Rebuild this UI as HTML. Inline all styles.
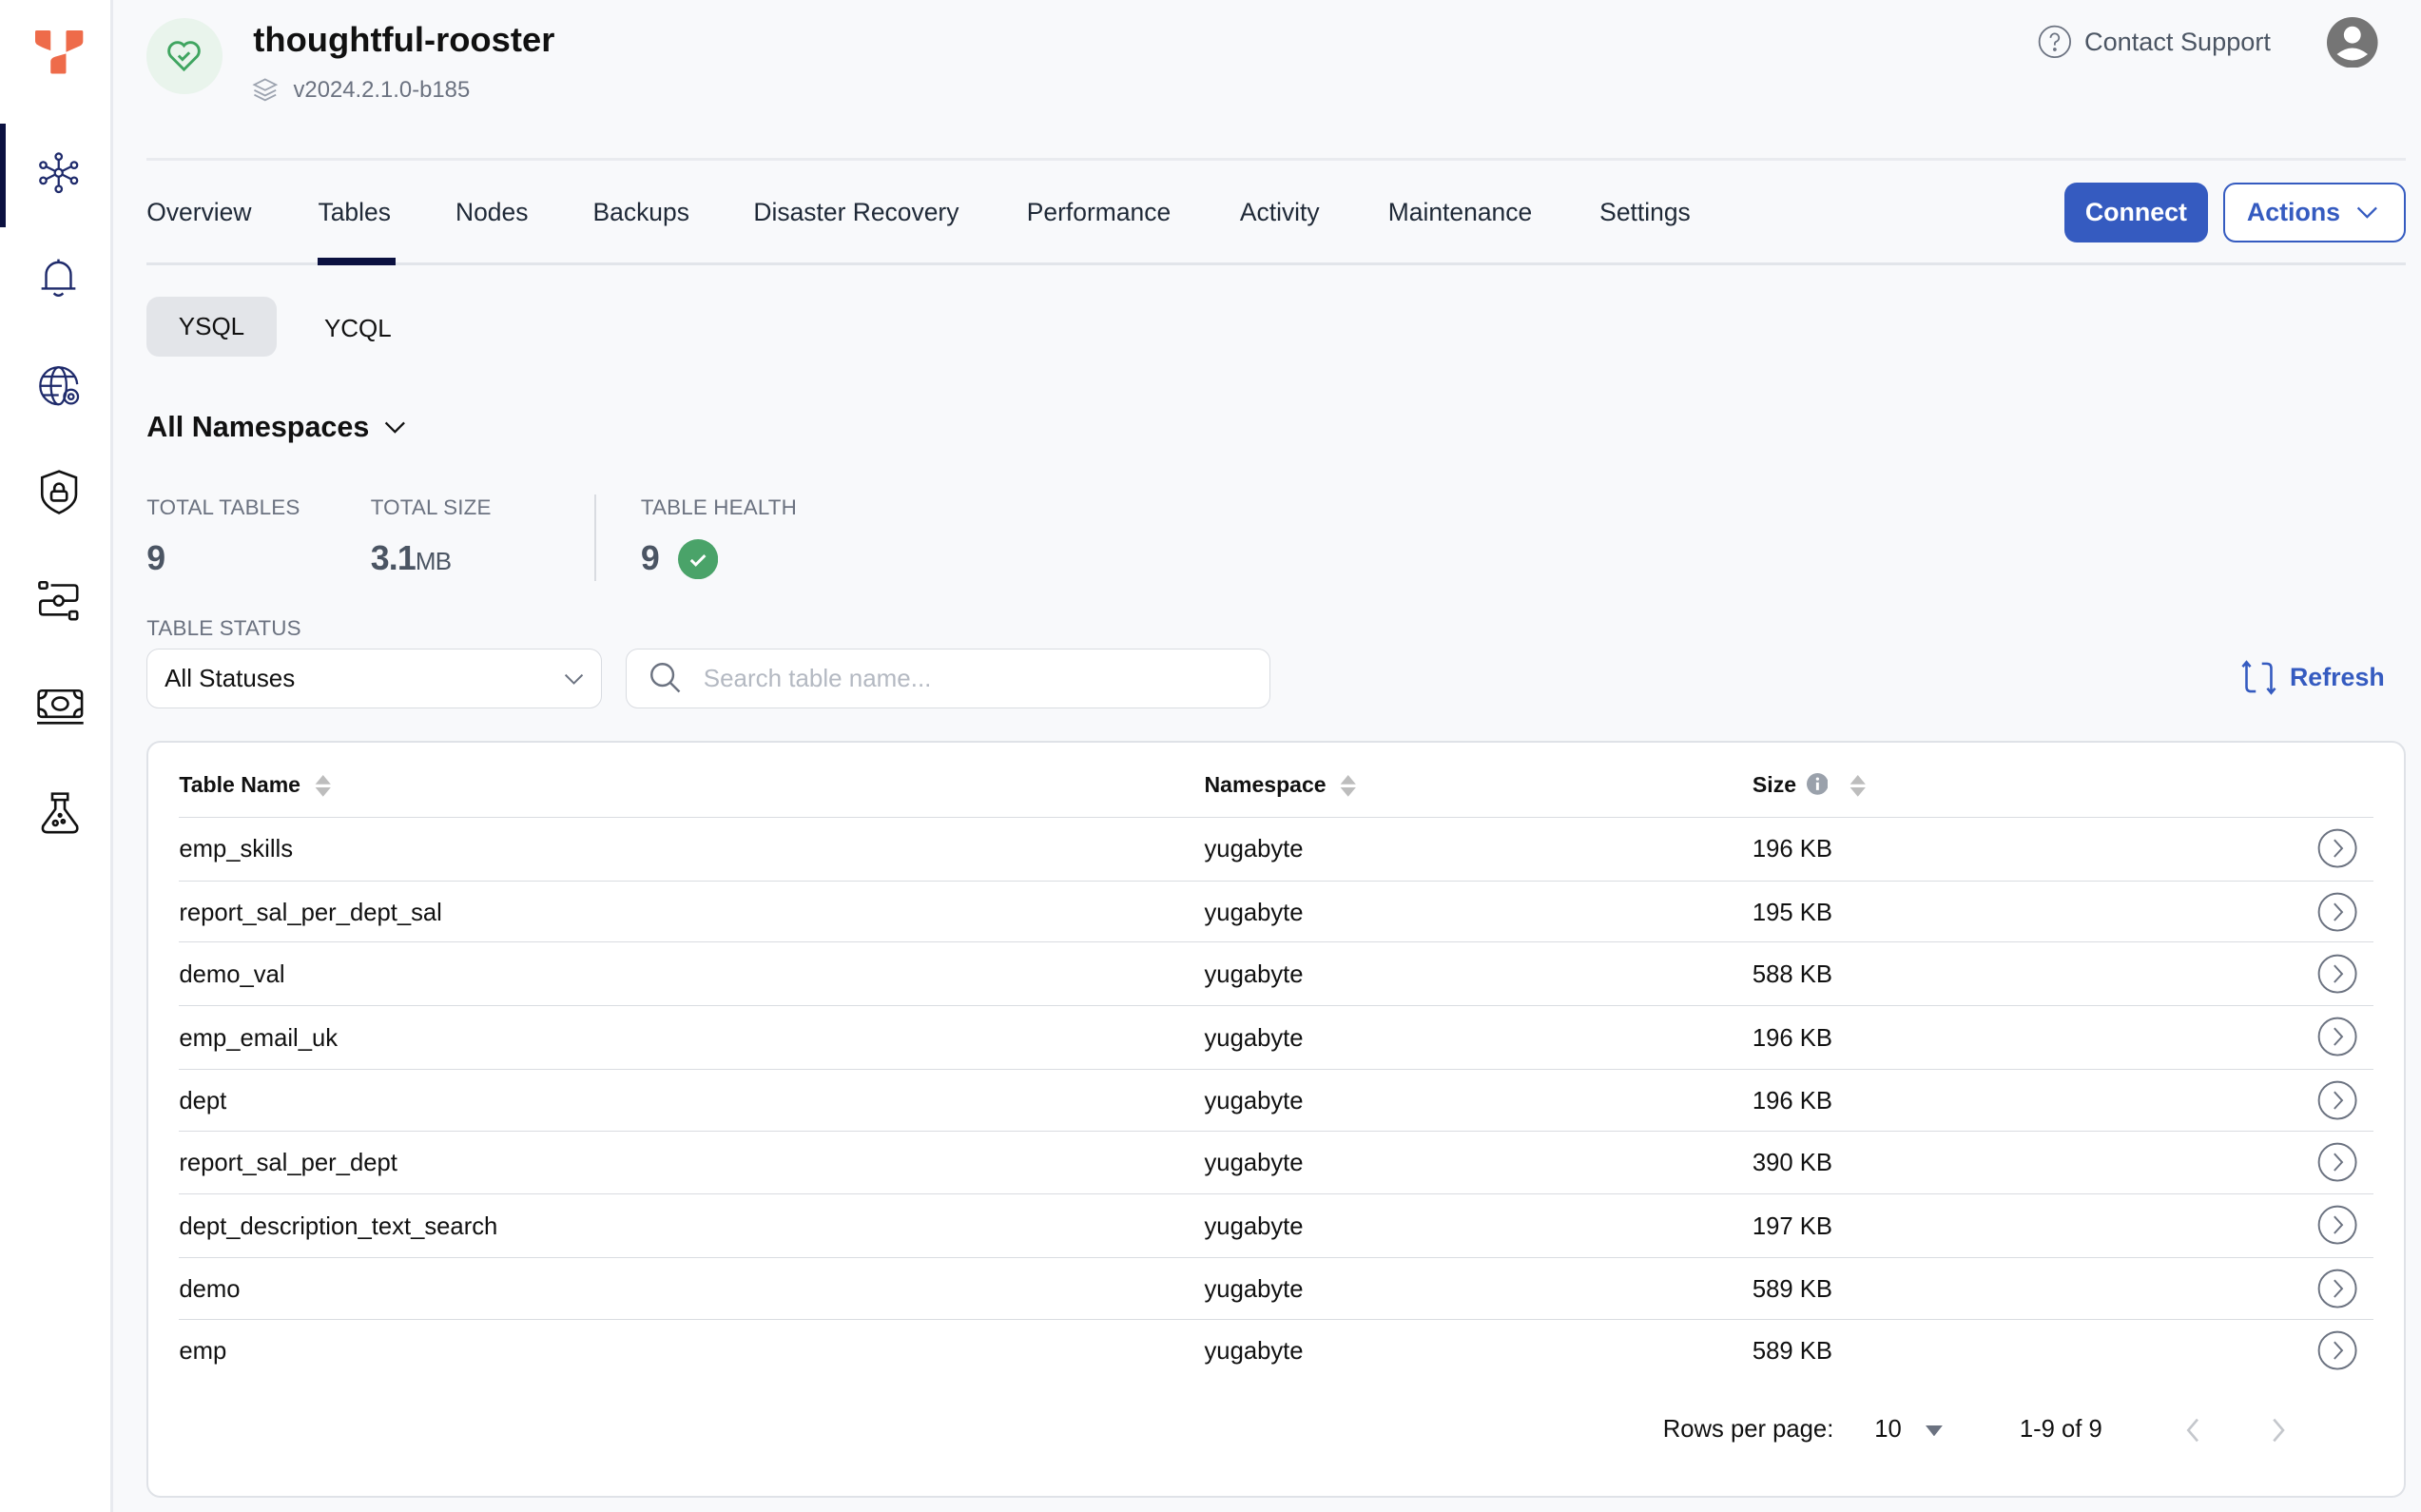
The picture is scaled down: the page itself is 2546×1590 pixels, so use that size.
<!DOCTYPE html>
<html><head><meta charset="utf-8"><style>
*{box-sizing:border-box;margin:0;padding:0}
html,body{width:2546px;height:1590px;overflow:hidden;background:#f8f9fb}
#r{zoom:1.62372;width:1568px;height:979px;position:relative;font-family:"Liberation Sans",sans-serif;color:#111827}
.a{position:absolute;white-space:nowrap}
.side{position:absolute;left:0;top:0;width:73px;height:979px;background:#fff;border-right:2px solid #e8eaef}
.tab{position:absolute;top:128px;font-size:16.3px;color:#1f2937}
.lbl{font-size:13.8px;color:#6b7280;letter-spacing:.1px}
.val{font-size:22px;font-weight:bold;color:#4b5563}
.row{position:absolute;left:116px;width:1421px;height:41px;border-top:1px solid #d9dce1;font-size:15.8px;color:#111}
.row span{position:absolute;top:12px}
.row svg{position:absolute;left:1385px;top:7px}
.th{font-size:14.2px;font-weight:bold;color:#111}
</style></head><body><div id="r">
<div class="side">
<svg class="a" style="left:23px;top:20px" width="31" height="28" viewBox="0 0 31 28"><path d="M0 1q0-1 1-1h8q1 0 1 1v12q-6-2-9-4-1-1-1-2z" fill="#ee6b4a"/><path d="M20 1q0-1 1-1h9q1 0 1 1v6q0 2-2 3l-9 4z" fill="#ee6b4a"/><path d="M20 15v12q0 1-1 1h-8q-1 0-1-1v-7q0-2 3-3z" fill="#ee6b4a"/></svg>
<div class="a" style="left:0;top:80px;width:4px;height:67px;background:#0b1140"></div>
<svg class="a" style="left:24px;top:98px" width="28" height="28" viewBox="0 0 28 28" fill="none" stroke="#1e2a6b" stroke-width="1.4"><circle cx="14" cy="14" r="2.5"/><circle cx="14" cy="3.5" r="2"/><circle cx="14" cy="24.5" r="2"/><circle cx="4" cy="9" r="2"/><circle cx="24" cy="9" r="2"/><circle cx="4" cy="19" r="2"/><circle cx="24" cy="19" r="2"/><path d="M14 5.5v6M14 16.5v6M6 10l6 3M22 10l-6 3M6 18l6-3M22 18l-6-3"/></svg>
<svg class="a" style="left:26px;top:167px" width="24" height="26" viewBox="0 0 24 26" fill="none" stroke="#1e2a6b" stroke-width="1.5"><path d="M4 20V11a8 8 0 0 1 16 0v9M1 20h22M12 1v2M9 23q3 3 6 0"/></svg>
<svg class="a" style="left:24px;top:236px" width="30" height="30" viewBox="0 0 30 30" fill="none" stroke="#1e2a6b" stroke-width="1.4"><path d="M14 26A12 12 0 1 1 26 13"/><ellipse cx="14" cy="14" rx="5" ry="12"/><path d="M2 14h14M4 8h20M4 20h10"/><circle cx="22" cy="21" r="4.5"/><circle cx="22" cy="21" r="1.7"/></svg>
<svg class="a" style="left:25px;top:304px" width="26" height="30" viewBox="0 0 26 30" fill="none" stroke="#111" stroke-width="1.6"><path d="M13 1l11 4v11q0 7-11 12Q2 23 2 16V5z"/><rect x="8" y="14" width="10" height="6" rx="1.5"/><path d="M10 14v-2a3 3 0 0 1 6 0v2"/></svg>
<svg class="a" style="left:24px;top:375px" width="28" height="28" viewBox="0 0 28 28" fill="none" stroke="#111" stroke-width="1.6"><rect x="1.5" y="2" width="5" height="4" rx="1"/><rect x="21" y="21" width="5" height="5" rx="1"/><circle cx="14" cy="14" r="3"/><path d="M9 4h15q2 0 2 2v6q0 2-2 2h-7M11 14H4q-2 0-2 2v5q0 2 2 2h16"/></svg>
<svg class="a" style="left:24px;top:445px" width="30" height="26" viewBox="0 0 30 26" fill="none" stroke="#111" stroke-width="1.6"><rect x="1" y="2" width="28" height="17" rx="2"/><ellipse cx="15" cy="10.5" rx="5" ry="4"/><path d="M1 7q5 0 5-5M29 7q-5 0-5-5M1 14q5 0 5 5M29 14q-5 0-5 5M0 23h30"/></svg>
<svg class="a" style="left:26px;top:513px" width="26" height="28" viewBox="0 0 26 28" fill="none" stroke="#111" stroke-width="1.6"><path d="M8 1h10v4H8zM10 5v6L2 22q-1 4 3 4h16q4 0 3-4L16 11V5"/><circle cx="10" cy="20" r="1.5"/><circle cx="15" cy="19" r="1"/><circle cx="13" cy="15" r=".8" fill="#111"/></svg>
</div>

<div class="a" style="left:95px;top:12px;width:49px;height:49px;border-radius:50%;background:#e9f4ec"></div>
<svg class="a" style="left:107px;top:24px" width="24" height="24" viewBox="0 0 24 24" fill="none" stroke="#3fa560" stroke-width="1.8"><path d="M12 21L3.5 12.5A5 5 0 0 1 12 5.5a5 5 0 0 1 8.5 7z"/><path d="M8.5 12l2.5 2.5 4.5-4.5"/></svg>
<div class="a" style="left:164px;top:13px;font-size:22.4px;font-weight:bold;color:#111">thoughtful-rooster</div>
<svg class="a" style="left:163px;top:50px" width="17" height="17" viewBox="0 0 17 17" fill="none" stroke="#9ca3af" stroke-width="1.1"><path d="M8.5 1.5l7 3.5-7 3.5-7-3.5zM1.5 8.5l7 3.5 7-3.5M1.5 11.5l7 3.5 7-3.5"/></svg>
<div class="a" style="left:190px;top:50px;font-size:14.7px;color:#6b7280">v2024.2.1.0-b185</div>

<svg class="a" style="left:1320px;top:16px" width="22" height="22" viewBox="0 0 22 22" fill="none" stroke="#6b7280" stroke-width="1.1"><circle cx="11" cy="11" r="10"/><path d="M8.3 8.5a2.7 2.7 0 1 1 3.6 2.5q-.9.4-.9 1.5v.8"/><circle cx="11" cy="16" r=".6" fill="#6b7280"/></svg>
<div class="a" style="left:1350px;top:17px;font-size:16.7px;color:#4b5563">Contact Support</div>
<svg class="a" style="left:1507px;top:11px" width="33" height="33" viewBox="0 0 33 33"><circle cx="16.5" cy="16.5" r="16.5" fill="#757575"/><circle cx="16.5" cy="11.5" r="5.5" fill="#fff"/><path d="M6.5 24q10-8 20 0q-10 8-20 0z" fill="#fff"/></svg>

<div class="a" style="left:95px;top:102px;width:1463px;height:2px;background:#e9ebef"></div>
<div class="a" style="left:95px;top:170px;width:1463px;height:2px;background:#e2e5ea"></div>
<div class="tab" style="left:95px">Overview</div>
<div class="tab" style="left:206px">Tables</div>
<div class="a" style="left:206px;top:167px;width:50px;height:5px;background:#0b1140"></div>
<div class="tab" style="left:295px">Nodes</div>
<div class="tab" style="left:384px">Backups</div>
<div class="tab" style="left:488px">Disaster Recovery</div>
<div class="tab" style="left:665px">Performance</div>
<div class="tab" style="left:803px">Activity</div>
<div class="tab" style="left:899px">Maintenance</div>
<div class="tab" style="left:1036px">Settings</div>
<div class="a" style="left:1337px;top:118px;width:93px;height:39px;border-radius:8px;background:#355bc0;color:#fff;font-size:16.5px;font-weight:bold;text-align:center;line-height:39px">Connect</div>
<div class="a" style="left:1440px;top:118px;width:118px;height:39px;border-radius:8px;border:1.5px solid #355bc0;background:#fff;color:#355bc0;font-size:16.5px;font-weight:bold;line-height:36px;padding-left:14px">Actions</div>
<svg class="a" style="left:1526px;top:133px" width="14" height="9" viewBox="0 0 14 9" fill="none" stroke="#355bc0" stroke-width="1.4"><path d="M1 1.5l6 6 6-6"/></svg>

<div class="a" style="left:95px;top:192px;width:84px;height:39px;border-radius:8px;background:#e3e5e9;font-size:16px;line-height:39px;text-align:center;color:#111">YSQL</div>
<div class="a" style="left:210px;top:203px;font-size:16px;color:#111">YCQL</div>

<div class="a" style="left:95px;top:266px;font-size:18.8px;font-weight:bold;color:#111">All Namespaces</div>
<svg class="a" style="left:249px;top:272px" width="14" height="9" viewBox="0 0 14 9" fill="none" stroke="#111" stroke-width="1.4"><path d="M1 1.5l6 6 6-6"/></svg>

<div class="a lbl" style="left:95px;top:321px">TOTAL TABLES</div>
<div class="a lbl" style="left:240px;top:321px">TOTAL SIZE</div>
<div class="a lbl" style="left:415px;top:321px">TABLE HEALTH</div>
<div class="a" style="left:385px;top:320px;width:1px;height:56px;background:#d9dce1"></div>
<div class="a val" style="left:95px;top:349px">9</div>
<div class="a val" style="left:240px;top:349px;letter-spacing:-.5px">3.1<span style="font-size:16px;font-weight:normal">MB</span></div>
<div class="a val" style="left:415px;top:349px">9</div>
<svg class="a" style="left:439px;top:349px" width="26" height="26" viewBox="0 0 26 26"><circle cx="13" cy="13" r="13" fill="#4aa369"/><path d="M8.5 13.5l3 3 6-6" fill="none" stroke="#fff" stroke-width="1.8"/></svg>

<div class="a lbl" style="left:95px;top:399px">TABLE STATUS</div>
<div class="a" style="left:95px;top:420px;width:295px;height:39px;border-radius:8px;border:1px solid #d9dce1;background:#fff;font-size:16px;line-height:37px;padding-left:11px;color:#111">All Statuses</div>
<svg class="a" style="left:365px;top:436px" width="13" height="8" viewBox="0 0 13 8" fill="none" stroke="#6b7280" stroke-width="1.2"><path d="M1 1l5.5 5.5L12 1"/></svg>
<div class="a" style="left:405px;top:420px;width:418px;height:39px;border-radius:8px;border:1px solid #d9dce1;background:#fff;font-size:16px;line-height:37px;padding-left:50px;color:#b4b9c2">Search table name...</div>
<svg class="a" style="left:420px;top:428px" width="22" height="22" viewBox="0 0 22 22" fill="none" stroke="#6b7280" stroke-width="1.5"><circle cx="9" cy="9" r="7"/><path d="M14 14l6 6"/></svg>
<svg class="a" style="left:1451px;top:427px" width="24" height="24" viewBox="0 0 24 24" fill="none" stroke="#355bc0" stroke-width="1.6"><path d="M4 2v16q0 3 3 3h3M1.5 5L4 2l2.5 3M14 3h3q3 0 3 3v16M17.5 19l2.5 3 2.5-3"/></svg>
<div class="a" style="left:1483px;top:429px;font-size:16.5px;font-weight:bold;color:#355bc0">Refresh</div>

<div class="a" style="left:95px;top:480px;width:1463px;height:490px;background:#fff;border:1.5px solid #dfe2e7;border-radius:9px"></div>
<div class="a th" style="left:116px;top:500px">Table Name</div>
<div class="a th" style="left:780px;top:500px">Namespace</div>
<div class="a th" style="left:1135px;top:500px">Size</div>
<svg class="a" style="left:203px;top:502px" width="12" height="14" viewBox="0 0 12 14" fill="#bdbdbd"><path d="M6 0l5 6H1zM6 14l5-6H1z"/></svg>
<svg class="a" style="left:867px;top:502px" width="12" height="14" viewBox="0 0 12 14" fill="#bdbdbd"><path d="M6 0l5 6H1zM6 14l5-6H1z"/></svg>
<svg class="a" style="left:1170px;top:501px" width="14" height="14" viewBox="0 0 14 14"><circle cx="7" cy="7" r="7" fill="#9aa1ab"/><rect x="6.1" y="6" width="1.8" height="5" fill="#fff"/><circle cx="7" cy="3.8" r="1" fill="#fff"/></svg>
<svg class="a" style="left:1197px;top:502px" width="12" height="14" viewBox="0 0 12 14" fill="#bdbdbd"><path d="M6 0l5 6H1zM6 14l5-6H1z"/></svg>

<div class="row" style="top:529px"><span style="left:0">emp_skills</span><span style="left:664px">yugabyte</span><span style="left:1019px">196 KB</span><svg width="26" height="26" viewBox="0 0 26 26" fill="none" stroke="#6b7280" stroke-width="1.2"><circle cx="13" cy="13" r="12"/><path d="M11 7.5l5 5.5-5 5.5"/></svg></div>
<div class="row" style="top:570px"><span style="left:0">report_sal_per_dept_sal</span><span style="left:664px">yugabyte</span><span style="left:1019px">195 KB</span><svg width="26" height="26" viewBox="0 0 26 26" fill="none" stroke="#6b7280" stroke-width="1.2"><circle cx="13" cy="13" r="12"/><path d="M11 7.5l5 5.5-5 5.5"/></svg></div>
<div class="row" style="top:610px"><span style="left:0">demo_val</span><span style="left:664px">yugabyte</span><span style="left:1019px">588 KB</span><svg width="26" height="26" viewBox="0 0 26 26" fill="none" stroke="#6b7280" stroke-width="1.2"><circle cx="13" cy="13" r="12"/><path d="M11 7.5l5 5.5-5 5.5"/></svg></div>
<div class="row" style="top:651px"><span style="left:0">emp_email_uk</span><span style="left:664px">yugabyte</span><span style="left:1019px">196 KB</span><svg width="26" height="26" viewBox="0 0 26 26" fill="none" stroke="#6b7280" stroke-width="1.2"><circle cx="13" cy="13" r="12"/><path d="M11 7.5l5 5.5-5 5.5"/></svg></div>
<div class="row" style="top:692px"><span style="left:0">dept</span><span style="left:664px">yugabyte</span><span style="left:1019px">196 KB</span><svg width="26" height="26" viewBox="0 0 26 26" fill="none" stroke="#6b7280" stroke-width="1.2"><circle cx="13" cy="13" r="12"/><path d="M11 7.5l5 5.5-5 5.5"/></svg></div>
<div class="row" style="top:732px"><span style="left:0">report_sal_per_dept</span><span style="left:664px">yugabyte</span><span style="left:1019px">390 KB</span><svg width="26" height="26" viewBox="0 0 26 26" fill="none" stroke="#6b7280" stroke-width="1.2"><circle cx="13" cy="13" r="12"/><path d="M11 7.5l5 5.5-5 5.5"/></svg></div>
<div class="row" style="top:773px"><span style="left:0">dept_description_text_search</span><span style="left:664px">yugabyte</span><span style="left:1019px">197 KB</span><svg width="26" height="26" viewBox="0 0 26 26" fill="none" stroke="#6b7280" stroke-width="1.2"><circle cx="13" cy="13" r="12"/><path d="M11 7.5l5 5.5-5 5.5"/></svg></div>
<div class="row" style="top:814px"><span style="left:0">demo</span><span style="left:664px">yugabyte</span><span style="left:1019px">589 KB</span><svg width="26" height="26" viewBox="0 0 26 26" fill="none" stroke="#6b7280" stroke-width="1.2"><circle cx="13" cy="13" r="12"/><path d="M11 7.5l5 5.5-5 5.5"/></svg></div>
<div class="row" style="top:854px"><span style="left:0">emp</span><span style="left:664px">yugabyte</span><span style="left:1019px">589 KB</span><svg width="26" height="26" viewBox="0 0 26 26" fill="none" stroke="#6b7280" stroke-width="1.2"><circle cx="13" cy="13" r="12"/><path d="M11 7.5l5 5.5-5 5.5"/></svg></div>

<div class="a" style="left:1077px;top:917px;font-size:15.8px;color:#111">Rows per page:</div>
<div class="a" style="left:1214px;top:917px;font-size:15.8px;color:#111">10</div>
<svg class="a" style="left:1247px;top:923px" width="11" height="7" viewBox="0 0 11 7" fill="#6b7280"><path d="M0 0h11L5.5 7z"/></svg>
<div class="a" style="left:1308px;top:917px;font-size:15.8px;color:#111">1-9 of 9</div>
<svg class="a" style="left:1415px;top:918px" width="10" height="16" viewBox="0 0 10 16" fill="none" stroke="#c4c7cc" stroke-width="1.6"><path d="M8 1L2 8l6 7"/></svg>
<svg class="a" style="left:1471px;top:918px" width="10" height="16" viewBox="0 0 10 16" fill="none" stroke="#c4c7cc" stroke-width="1.6"><path d="M2 1l6 7-6 7"/></svg>
</div></body></html>
